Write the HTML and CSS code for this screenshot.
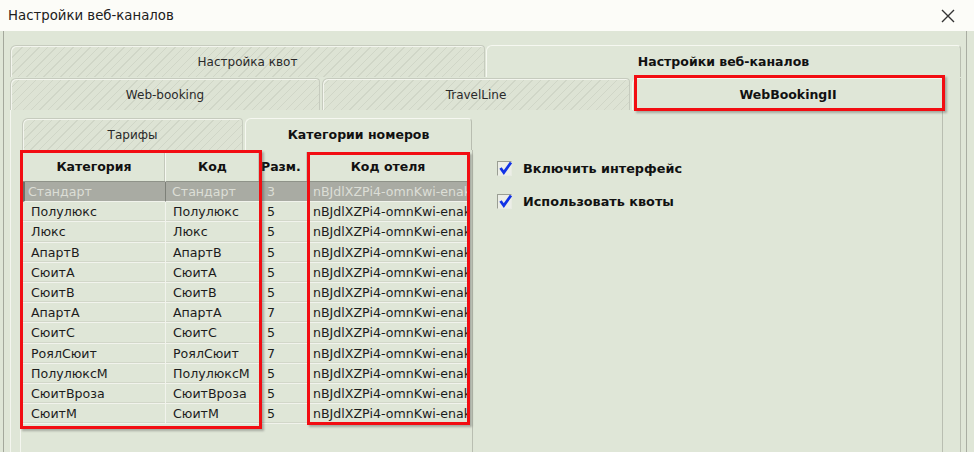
FILE: index.html
```html
<!DOCTYPE html>
<html lang="ru">
<head>
    <meta charset="UTF-8">
    <title>Настройки веб-каналов</title>
    <link rel="stylesheet" href="styles.css">
</head>
<body>
    <div class="window">
        <div class="titlebar">
            <span class="title">Настройки веб-каналов</span>
            <svg class="close" width="14" height="14" viewBox="0 0 14 14">
                <path d="M1 1 L13 13 M13 1 L1 13" stroke="#333" stroke-width="1.4" fill="none"/>
            </svg>
        </div>

        <div class="dialog">
            <!-- outer tabs -->
            <div class="tabs tabs-outer">
                <div class="tab hatch t-quota">Настройка квот</div>
                <div class="tab active t-web">Настройки веб-каналов</div>
            </div>
            <div class="panel panel-outer">
                <!-- channel tabs -->
                <div class="tabs tabs-mid">
                    <div class="tab hatch t-wb">Web-booking</div>
                    <div class="tab hatch t-tl">TravelLine</div>
                    <div class="tab active t-wb2">WebBookingII</div>
                </div>
                <div class="panel panel-mid">
                    <div class="inner-left">
                        <div class="tabs tabs-inner">
                            <div class="tab hatch t-tariff">Тарифы</div>
                            <div class="tab active t-cat">Категории номеров</div>
                        </div>
                        <div class="panel panel-inner">
                            <div class="grid">
                                <div class="row head">
                                    <div class="cell c1">Категория</div>
                                    <div class="cell c2">Код</div>
                                    <div class="cell c3">Разм.</div>
                                    <div class="cell c4">Код отеля</div>
                                </div>
                                <div class="row selected">
                                    <div class="cell c1">Стандарт</div>
                                    <div class="cell c2">Стандарт</div>
                                    <div class="cell c3">3</div>
                                    <div class="cell c4">nBJdlXZPi4-omnKwi-enak</div>
                                </div>
                                <div class="row"><div class="cell c1">Полулюкс</div><div class="cell c2">Полулюкс</div><div class="cell c3">5</div><div class="cell c4">nBJdlXZPi4-omnKwi-enak</div></div>
                                <div class="row"><div class="cell c1">Люкс</div><div class="cell c2">Люкс</div><div class="cell c3">5</div><div class="cell c4">nBJdlXZPi4-omnKwi-enak</div></div>
                                <div class="row"><div class="cell c1">АпартВ</div><div class="cell c2">АпартВ</div><div class="cell c3">5</div><div class="cell c4">nBJdlXZPi4-omnKwi-enak</div></div>
                                <div class="row"><div class="cell c1">СюитА</div><div class="cell c2">СюитА</div><div class="cell c3">5</div><div class="cell c4">nBJdlXZPi4-omnKwi-enak</div></div>
                                <div class="row"><div class="cell c1">СюитВ</div><div class="cell c2">СюитВ</div><div class="cell c3">5</div><div class="cell c4">nBJdlXZPi4-omnKwi-enak</div></div>
                                <div class="row"><div class="cell c1">АпартА</div><div class="cell c2">АпартА</div><div class="cell c3">7</div><div class="cell c4">nBJdlXZPi4-omnKwi-enak</div></div>
                                <div class="row"><div class="cell c1">СюитС</div><div class="cell c2">СюитС</div><div class="cell c3">5</div><div class="cell c4">nBJdlXZPi4-omnKwi-enak</div></div>
                                <div class="row"><div class="cell c1">РоялСюит</div><div class="cell c2">РоялСюит</div><div class="cell c3">7</div><div class="cell c4">nBJdlXZPi4-omnKwi-enak</div></div>
                                <div class="row"><div class="cell c1">ПолулюксМ</div><div class="cell c2">ПолулюксМ</div><div class="cell c3">5</div><div class="cell c4">nBJdlXZPi4-omnKwi-enak</div></div>
                                <div class="row"><div class="cell c1">СюитВроза</div><div class="cell c2">СюитВроза</div><div class="cell c3">5</div><div class="cell c4">nBJdlXZPi4-omnKwi-enak</div></div>
                                <div class="row"><div class="cell c1">СюитМ</div><div class="cell c2">СюитМ</div><div class="cell c3">5</div><div class="cell c4">nBJdlXZPi4-omnKwi-enak</div></div>
                            </div>
                        </div>
                    </div>

                    <div class="options">
                        <label class="check">
                            <span class="box"><svg width="16" height="16" viewBox="0 0 16 16"><path d="M3.5 8 L6.8 12.5 L14 2.5" stroke="#1233e6" stroke-width="2.8" fill="none"/></svg></span>
                            Включить интерфейс
                        </label>
                        <label class="check">
                            <span class="box"><svg width="16" height="16" viewBox="0 0 16 16"><path d="M3.5 8 L6.8 12.5 L14 2.5" stroke="#1233e6" stroke-width="2.8" fill="none"/></svg></span>
                            Использовать квоты
                        </label>
                    </div>
                </div>
            </div>
        </div>

        <!-- annotation frames -->
        <div class="mark mark-tab"></div>
        <div class="mark mark-cat"></div>
        <div class="mark mark-hotel"></div>
    </div>
</body>
</html>
```

FILE: styles.css
```css
body {
    margin: 0;
    padding: 0;
    font-family: "DejaVu Sans", Verdana, sans-serif;
    font-size: 12px;
    color: #1c1c1c;
    background-color: #dfe6d7;
}
.window {
    position: relative;
    width: 974px;
    height: 452px;
    overflow: hidden;
    background-color: #dfe6d7;
}
.titlebar {
    height: 31px;
    background-color: #fcfcf8;
    display: flex;
    align-items: center;
    justify-content: space-between;
    padding: 0 19px 0 8px;
}
.title {
    font-size: 13.3px;
    color: #202020;
}
.dialog {
    height: 421px;
    margin-left: 3px;
    width: 964px;
    border-left: 1px solid #a4a89c;
    border-right: 1px solid #a9ada2;
    padding-top: 14px;
    box-sizing: border-box;
}

/* tabs */
.tabs {
    display: flex;
    gap: 1px;
    height: 32px;
}
.tab {
    box-sizing: border-box;
    height: 32px;
    display: flex;
    align-items: center;
    justify-content: center;
    border: 1px solid #c6cbbe;
    border-bottom: none;
    border-radius: 6px 4px 0 0;
    box-shadow: inset 1px 1px 0 #f3f5ee;
    color: #2a2a2a;
}
.hatch {
    background: repeating-linear-gradient(-45deg, #dde3d4 0 5px, #d0d6c7 5px 6px);
}
.active {
    background-color: #dfe6d7;
    font-weight: bold;
    font-size: 12.5px;
    color: #111;
    border-color: #b8bdb0;
    border-top-color: #f6f8f1;
    border-left-color: #f6f8f1;
    box-shadow: none;
}
.tabs-outer {
    padding-left: 6px;
}
.t-quota { width: 475px; }
.t-web { width: 475px; }

.tabs-mid {
    margin-top: 1px;
    gap: 2px;
}
.t-wb { width: 310px; }
.t-tl { width: 308px; }
.t-wb2 { width: 312px; }

.tabs-inner {
    margin-left: 2px;
    gap: 2px;
}
.t-tariff { width: 221px; }
.t-cat { width: 227px; }

/* panels */
.panel {
    box-sizing: border-box;
}
.panel-outer {
    margin-left: 6px;
    width: 951px;
    height: 375px;
    border-right: 1px solid #b9beb1;
}
.panel-mid {
    width: 933px;
    height: 343px;
    border-left: 1px solid #f4f6ef;
    border-right: 1px solid #b9beb1;
    display: flex;
    padding: 8px 0 0 9px;
}
.inner-left {
    width: 453px;
    display: flex;
    flex-direction: column;
}
.panel-inner {
    flex: 1;
    border-left: 1px solid #f4f6ef;
    border-right: 1px solid #b9beb1;
    padding: 2px 0 0 2px;
}

/* grid */
.grid {
    width: 446px;
    font-size: 12.6px;
}
.row {
    display: flex;
    height: 20.2px;
}
.cell {
    box-sizing: border-box;
    padding-left: 7px;
    white-space: nowrap;
    overflow: hidden;
    display: flex;
    align-items: center;
    border-right: 1px solid #f1f3ec;
    border-bottom: 1px solid #f1f3ec;
    box-shadow: inset 0 -1px 0 #d2d7c9;
}
.c1 { width: 143px; padding-left: 8px; }
.c2 { width: 94px; }
.c3 { width: 48px; }
.c4 { width: 161px; padding-left: 5px; border-right: none; }

.head {
    height: 30px;
}
.head .cell {
    justify-content: center;
    padding-left: 0;
    font-weight: bold;
    font-size: 12.5px;
    color: #111;
    border-right: 1px solid #f6f8f1;
    border-bottom: 1px solid #8f9389;
    box-shadow: inset -1px 0 0 #c3c8bb;
}
.head .c3 {
    justify-content: flex-start;
    padding-left: 1px;
}
.selected .cell {
    background-color: #a9aba3;
    color: #dcded6;
    border-right-color: #7d8078;
    box-shadow: none;
}
.selected .c1 {
    border-left: 2px solid #6e7169;
    padding-left: 3px;
}
.selected .c2 {
    padding-left: 6px;
}

/* options */
.options {
    padding: 43px 0 0 24px;
    display: flex;
    flex-direction: column;
    gap: 18px;
}
.check {
    display: flex;
    align-items: center;
    gap: 11px;
    font-weight: bold;
    font-size: 12.8px;
    color: #111;
    height: 15px;
}
.box {
    width: 15px;
    height: 15px;
    box-sizing: border-box;
    border: 1px solid #9a9e93;
    border-right-color: #e8ebe2;
    border-bottom-color: #e8ebe2;
    background-color: #eceee7;
    display: flex;
}
.box svg {
    margin: -2px 0 0 -1px;
    flex: none;
}

/* red annotation frames */
.mark {
    position: absolute;
    box-sizing: border-box;
    border: 3px solid #f20d12;
    box-shadow: 2px 2px 2px rgba(60, 60, 60, 0.35);
}
.mark-tab {
    left: 634px;
    top: 75px;
    width: 311px;
    height: 36px;
}
.mark-cat {
    left: 20px;
    top: 150px;
    width: 242px;
    height: 279px;
}
.mark-hotel {
    left: 307px;
    top: 152px;
    width: 163px;
    height: 273px;
}
```
